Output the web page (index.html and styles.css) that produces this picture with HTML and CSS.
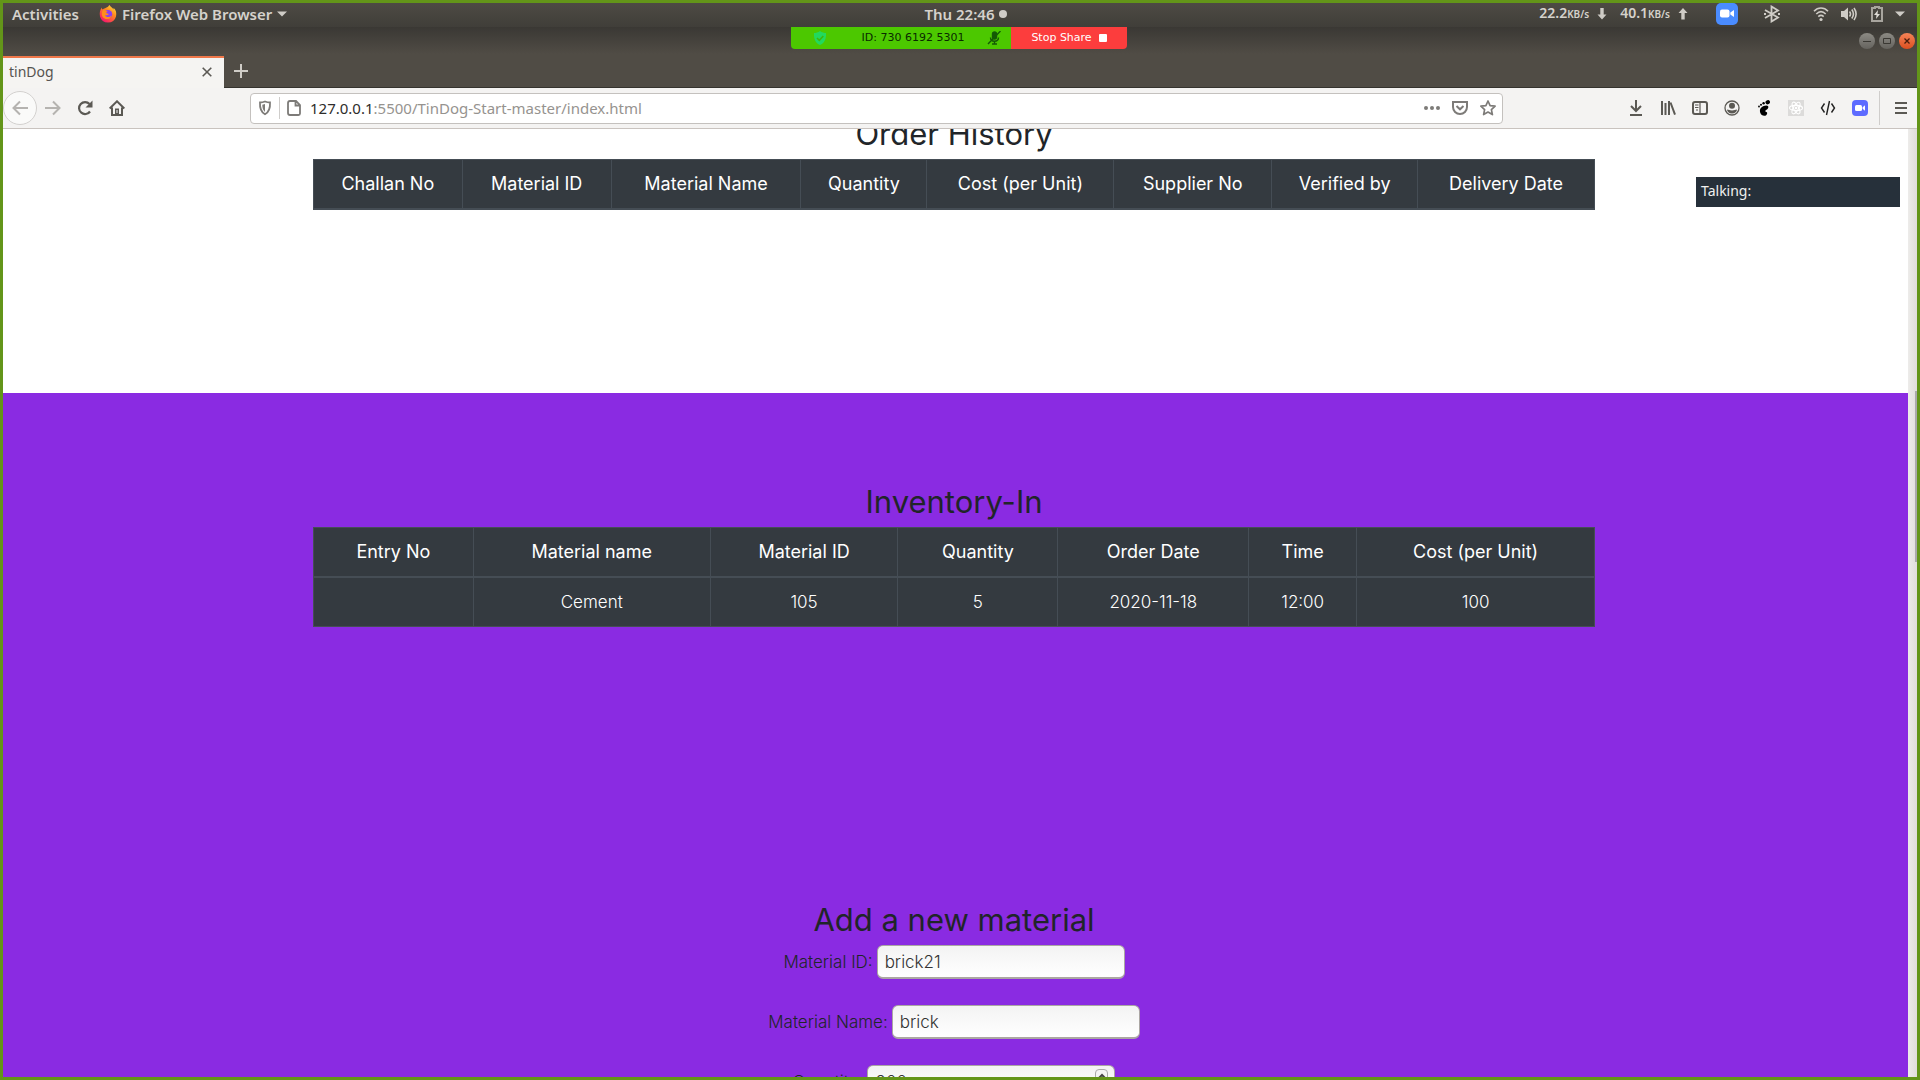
FILE: index.html
```html
<!DOCTYPE html>
<html lang="en">
<head>
<meta charset="utf-8">
<title>tinDog</title>
<link rel="stylesheet" href="styles.css">
</head>
<body>
<header class="topbar">
  <nav class="topbar-left">
    <button class="bare">Activities</button>
    <button class="bare app-menu">
      <svg width="18" height="18" viewBox="0 0 18 18"><defs><linearGradient id="fx" x1="1" y1="0" x2="0.3" y2="1"><stop offset="0" stop-color="#fff044"/><stop offset=".45" stop-color="#ff8a1e"/><stop offset="1" stop-color="#f5156c"/></linearGradient></defs><path d="M9 1.8C10 .8 10.200 0 10.500 0c1 2 3 2.500 4 4.500 0-.8.2-1.300 0-1.700C17 5 17.800 8 17 11.500A8.300 8.300 0 0 1 1 11.500C.3 8 1 5 2.800 2.600c0 1 .3 1.500.7 2C5 3.500 7 3 9 1.800z" fill="url(#fx)"/><circle cx="9" cy="9.200" r="4.200" fill="#8a3ff0"/><path d="M4 5c2 .2 3.500.5 4.800 1.600-2 .2-1.800 1.400-.6 1.800 1 .2 1.500.2 1.600.8-1 1.400-2.600.9-3.800 1 1 2 4 2.600 6.500.2C12 15 5 15.500 3.200 11 2.500 9 3 6.500 4 5z" fill="#ff8d1a"/></svg>
      <span>Firefox Web Browser</span>
      <svg width="10" height="6" viewBox="0 0 10 6"><path d="M0 .5h10L5 5.500z" fill="#cfccc6"/></svg>
    </button>
  </nav>
  <button class="bare clock"><span>Thu 22:46</span><i class="dot"></i></button>
  <div class="tray">
    <span class="rate">22.2<small>KB/s</small></span>
    <svg width="10" height="12" viewBox="0 0 10 12"><path d="M3.300 0h3.400v6.500H9.500L5 11.500.5 6.500h2.800z" fill="#cfccc6"/></svg>
    <span class="rate up">40.1<small>KB/s</small></span>
    <svg width="10" height="12" viewBox="0 0 10 12"><path d="M3.300 11.500h3.400V5H9.500L5 0 .5 5h2.800z" fill="#cfccc6"/></svg>
    <svg class="t-zoom" width="22" height="22" viewBox="0 0 22 22"><rect width="22" height="22" rx="5" fill="#4a8cff"/><rect x="4" y="6.500" width="9.500" height="8" rx="2" fill="#fff"/><path d="M14.300 9.500l3.700-2.500v7l-3.700-2.500z" fill="#fff"/></svg>
    <svg class="t-bt" width="18" height="18" viewBox="0 0 18 18" fill="none" stroke="#cfccc6" stroke-width="1.800"><path d="M2 5l13 7.500L8.500 16.500V1.500L15 5.500 2 13M1 9h2M15 9h2"/></svg>
    <svg class="t-wifi" width="16" height="16" viewBox="0 0 16 16" fill="none" stroke="#cfccc6" stroke-width="1.600"><path d="M1 5.200c4-4.200 10-4.200 14 0M3.300 8c3-3 6.400-3 9.400 0M5.300 10.600c1.800-1.600 3.600-1.600 5.400 0"/><circle cx="8" cy="13.500" r="1.600" fill="#cfccc6" stroke="none"/></svg>
    <svg class="t-vol" width="16" height="16" viewBox="0 0 16 16" fill="none" stroke="#cfccc6" stroke-width="1.600"><path d="M0 5h3l4-3.500v13L3 11H0z" fill="#cfccc6" stroke="none"/><path d="M8.500 5.500c1.200 1.500 1.200 3.500 0 5M10.800 3.500c2.200 3 2.200 6 0 9M13 2c2.800 4 2.800 8 0 12"/></svg>
    <svg class="t-bat" width="12" height="16" viewBox="0 0 12 16"><path d="M4 2V1h4v1h3v13H1V2z" fill="none" stroke="#a8a59e" stroke-width="2"/><path d="M7 4L3 9h2.500L5 13l4-5H6.500z" fill="#dfdcd6"/></svg>
    <svg class="t-arrow" width="10" height="6" viewBox="0 0 10 6"><path d="M0 .5h10L5 5.500z" fill="#cfccc6"/></svg>
  </div>
</header>

<div class="titlebar">
  <div class="tab">
    <span>tinDog</span>
    <button class="bare" aria-label="Close tab"><svg width="10" height="10" viewBox="0 0 10 10" stroke="#5b5954" stroke-width="1.600"><path d="M.7.7l8.600 8.600M9.300.7L.7 9.300"/></svg></button>
  </div>
  <button class="bare newtab" aria-label="New tab"><svg width="14" height="14" viewBox="0 0 14 14" stroke="#cfccc6" stroke-width="2"><path d="M7 0v14M0 7h14"/></svg></button>
  <div class="winbtns">
    <button class="win" aria-label="Minimize"><svg width="10" height="10" viewBox="0 0 10 10" stroke="#3a3833" fill="none"><path d="M1 5.500h8"/></svg></button>
    <button class="win" aria-label="Maximize"><svg width="10" height="10" viewBox="0 0 10 10" stroke="#3a3833" fill="none"><path d="M1.500 2.500h7v5h-7z"/></svg></button>
    <button class="win close" aria-label="Close"><svg width="10" height="10" viewBox="0 0 10 10" stroke="#4a1d0c" stroke-width="1.300"><path d="M2.500 2.500l5 5M7.500 2.500l-5 5"/></svg></button>
  </div>
</div>

<div class="toolbar">
  <div class="navbtns">
    <button class="tool back" aria-label="Back"><svg width="16" height="16" viewBox="0 0 16 16" fill="none" stroke="#b5b3b0" stroke-width="2"><path d="M16 8H1.500M8 1.500L1.500 8 8 14.500"/></svg></button>
    <button class="tool" aria-label="Forward"><svg width="16" height="16" viewBox="0 0 16 16" fill="none" stroke="#b5b3b0" stroke-width="2"><path d="M0 8h14.500M8 1.500L14.500 8 8 14.500"/></svg></button>
    <button class="tool" aria-label="Reload"><svg width="16" height="16" viewBox="0 0 16 16" fill="none" stroke="#5b5954" stroke-width="2.200"><path d="M13 11.500A6 6 0 1 1 12.500 4"/><path d="M15.500.5v7h-7z" fill="#5b5954" stroke="none"/></svg></button>
    <button class="tool" aria-label="Home"><svg width="16" height="16" viewBox="0 0 16 16" fill="none" stroke="#5b5954" stroke-width="2"><path d="M.7 8.500L8 1.300l7.300 7.200M3 7.500V15h10V7.500"/><path d="M6 8.500h4V15H6z" fill="#5b5954" stroke="none"/><path d="M7.500 10h1v3h-1z" fill="#f4f3f2" stroke="none"/></svg></button>
  </div>
  <div class="urlbar">
    <svg class="shield" width="14" height="16" viewBox="0 0 14 16"><path d="M7 1.500c2 .8 4 1 5 1 .3 5-.8 9.500-5 11.800C2.800 12 1.700 7.500 2 2.500c1 0 3-.2 5-1z" fill="none" stroke="#7d7b78" stroke-width="1.800"/><path d="M7 4v8C5 10 4.300 8 4.300 4.700z" fill="#7d7b78"/></svg>
    <i class="vline"></i>
    <svg width="14" height="16" viewBox="0 0 14 16" fill="none" stroke="#7d7b78" stroke-width="1.800"><path d="M3 1h6l4 4v8.500Q13 15 11.500 15H3Q1 15 1 13V3Q1 1 3 1zM8.500 1v4.500H13"/></svg>
    <a class="url" href="#"><b>127.0.0.1</b>:5500/TinDog-Start-master/index.html</a>
    <svg width="16" height="16" viewBox="0 0 16 16" fill="#7d7b78"><circle cx="2" cy="8" r="2"/><circle cx="8" cy="8" r="2"/><circle cx="14" cy="8" r="2"/></svg>
    <svg width="16" height="16" viewBox="0 0 16 16" fill="none" stroke="#7d7b78" stroke-width="2"><path d="M1 2h14v5a7 7 0 0 1-14 0zM4.500 6L8 9.300 11.500 6"/></svg>
    <svg width="16" height="16" viewBox="0 0 16 16" fill="none" stroke="#7d7b78" stroke-width="1.700" stroke-linejoin="round"><path d="M8 1l2.100 4.600 5 .6-3.700 3.400 1 5L8 12.100l-4.400 2.500 1-5L.9 6.200l5-.6z"/></svg>
  </div>
  <div class="tools">
    <button class="tool" aria-label="Downloads"><svg width="16" height="16" viewBox="0 0 16 16" fill="none" stroke="#5b5954" stroke-width="2"><path d="M8 0v11M3 6l5 5 5-5M2 15h12"/></svg></button>
    <button class="tool" aria-label="Library"><svg width="16" height="16" viewBox="0 0 16 16" fill="none" stroke="#5b5954" stroke-width="2"><path d="M2 1v14M5.500 3v12M9 1v14M10.500 2.500L15 14.700"/></svg></button>
    <button class="tool" aria-label="Sidebar"><svg width="16" height="16" viewBox="0 0 16 16" fill="none" stroke="#5b5954" stroke-width="2"><rect x="1" y="2" width="14" height="12" rx="2"/><path d="M8 2v12M3 5h3.500M3 7.500h3.500M4 10h2" stroke-width="1.200"/></svg></button>
    <button class="tool" aria-label="Account"><svg width="16" height="16" viewBox="0 0 16 16"><circle cx="8" cy="8" r="7" fill="none" stroke="#5b5954" stroke-width="1.300"/><circle cx="8" cy="5.800" r="3" fill="#5b5954"/><path d="M3 9.500c2 0 2.500 1 5 1s3-1 5-1c0 2-2 4-5 4s-5-2-5-4z" fill="#5b5954"/></svg></button>
    <button class="tool" aria-label="GNOME extensions"><svg width="16" height="16" viewBox="0 0 16 16" fill="#000"><ellipse cx="11.700" cy="2.200" rx="2.300" ry="2" transform="rotate(-30 11.700 2.200)"/><circle cx="7.600" cy="3.200" r="1.200"/><circle cx="5" cy="4.700" r="1"/><circle cx="3" cy="6.500" r=".9"/><path d="M10.500 5.500c2.500 0 2.500 3 0 4.200-1.500.7-1.500 2-.2 2.300 1.500 0 1.200 3.800-2 3.800C4.500 15.800 3 11 4.500 8.500 5.800 6.500 8 5.500 10.500 5.500z"/></svg></button>
    <button class="tool" aria-label="React tools"><svg width="16" height="16" viewBox="0 0 16 16"><path d="M0 0h16v16H0z" fill="#dcdbda"/><g fill="none" stroke="#fff" stroke-width="1.100"><ellipse cx="8" cy="8" rx="6.500" ry="2.600"/><ellipse cx="8" cy="8" rx="6.500" ry="2.600" transform="rotate(60 8 8)"/><ellipse cx="8" cy="8" rx="6.500" ry="2.600" transform="rotate(120 8 8)"/></g><circle cx="8" cy="8" r="1.300" fill="#fff"/></svg></button>
    <button class="tool" aria-label="Code"><svg width="16" height="16" viewBox="0 0 16 16" fill="none" stroke="#222" stroke-width="1.400"><path d="M4.500 3.500L1.500 8l3 4.500M11.500 3.500l3 4.500-3 4.500M9.500 1l-3 14"/></svg></button>
    <button class="tool" aria-label="Zoom"><svg width="16" height="16" viewBox="0 0 16 16"><rect width="16" height="16" rx="4" fill="#5d6bff"/><rect x="3" y="5" width="7" height="6" rx="1.500" fill="#fff"/><path d="M10.600 7.300L13 5.300v5.400l-2.400-2z" fill="#fff"/></svg></button>
    <i class="vline tall"></i>
    <button class="tool" aria-label="Menu"><svg width="12" height="14" viewBox="0 0 12 14" stroke="#5b5954" stroke-width="2"><path d="M0 2h12M0 7h12M0 12h12"/></svg></button>
  </div>
</div>

<div class="viewport">
  <main class="page">
    <section class="history">
      <h3>Order History</h3>
      <table>
        <colgroup><col class="w149"><col class="w149"><col class="w190"><col class="w126"><col class="w187"><col class="w158"><col class="w146"><col></colgroup>
        <thead><tr><th>Challan No</th><th>Material ID</th><th>Material Name</th><th>Quantity</th><th>Cost (per Unit)</th><th>Supplier No</th><th>Verified by</th><th>Delivery Date</th></tr></thead>
      </table>
    </section>
    <section class="inventory">
      <h3>Inventory-In</h3>
      <table>
        <colgroup><col class="w160"><col class="w237"><col class="w188"><col class="w160"><col class="w191"><col class="w108"><col></colgroup>
        <thead><tr><th>Entry No</th><th>Material name</th><th>Material ID</th><th>Quantity</th><th>Order Date</th><th>Time</th><th>Cost (per Unit)</th></tr></thead>
        <tbody><tr><td></td><td>Cement</td><td>105</td><td>5</td><td>2020-11-18</td><td>12:00</td><td>100</td></tr></tbody>
      </table>
      <form class="material">
        <h3>Add a new material</h3>
        <div class="field"><label for="mid">Material ID:</label><input id="mid" type="text" value="brick21"></div>
        <div class="field"><label for="mname">Material Name:</label><input id="mname" type="text" value="brick"></div>
        <div class="field"><label for="qty">Quantity:</label><span class="number"><input id="qty" type="number" value="200"><span class="spin"><svg width="8" height="6" viewBox="0 0 8 6" fill="none" stroke="#444" stroke-width="2"><path d="M1 5l3-3 3 3"/></svg></span></span></div>
      </form>
    </section>
  </main>
  <div class="scrollbar"><i class="thumb"></i></div>
</div>

<div class="share">
  <div class="share-id">
    <svg width="14" height="14" viewBox="0 0 14 14"><path d="M7 0c2 1.400 4 2 6 2 .3 6-1.500 10-6 12C2.500 12 .7 8 1 2c2 0 4-.6 6-2z" fill="#22d95e"/><path d="M4 7l2.300 2.300L10.300 5" fill="none" stroke="#3fb80a" stroke-width="1.600"/></svg>
    <span>ID: 730 6192 5301</span>
    <svg width="14" height="14" viewBox="0 0 14 14" fill="none" stroke="#145a05" stroke-width="1.400"><rect x="5.500" y="1" width="4" height="7" rx="2" fill="#145a05"/><path d="M3.500 6.500c0 5 8 5 8 0M7.500 10v3M5 13h5M13.500 0L1 13"/></svg>
  </div>
  <button class="stop">Stop Share<i></i></button>
</div>
<div class="talking">Talking:</div>
<div class="frame"></div>
</body>
</html>
```
FILE: styles.css
```css
* { box-sizing: border-box; }
body {
  margin: 0;
  height: 100vh;
  display: flex;
  flex-direction: column;
  overflow: hidden;
  position: relative;
  font: 14px/20px "Noto Sans", sans-serif;
  background: #fff;
}
button { font: inherit; color: inherit; padding: 0; margin: 0; border: 0; background: none; }
svg { display: block; flex: none; }
.bare { display: flex; align-items: center; }

/* desktop panel */
.topbar {
  flex: none;
  height: 27px;
  padding: 0 15px 0 12px;
  display: grid;
  grid-template-columns: 1fr auto 1fr;
  align-items: center;
  background: linear-gradient(#4f4c45, #403e39);
  color: #d5d2cc;
  font-size: 15px;
  font-weight: 600;
}
.topbar-left { display: flex; gap: 20px; }
.app-menu { gap: 5px; }
.clock { gap: 4px; padding-left: 14px; }
.dot { width: 8px; height: 8px; border-radius: 50%; background: #d0cdc8; }
.tray { display: flex; align-items: center; justify-content: flex-end; font-size: 14px; }
.rate { margin-right: 8px; }
.rate.up { margin-left: 13px; }
.rate small { font-size: 10px; }
.t-zoom { margin-left: 28px; }
.t-bt { margin-left: 25px; }
.t-wifi { margin-left: 32px; }
.t-vol { margin-left: 12px; }
.t-bat { margin-left: 14px; }
.t-arrow { margin-left: 12px; }

/* browser window */
.titlebar {
  flex: none;
  height: 61px;
  display: flex;
  align-items: flex-end;
  background: linear-gradient(#3a3834, #504c45 45%);
  border-bottom: 1px solid #35332e;
}
.tab {
  width: 224px;
  height: 32px;
  padding: 0 12px 2px 9px;
  display: flex;
  align-items: center;
  justify-content: space-between;
  background: #f5f4f2;
  border-top: 2px solid #f0784a;
  margin-bottom: -1px;
  color: #55534f;
}
.newtab { height: 33px; margin-left: 10px; }
.winbtns { margin-left: auto; align-self: flex-start; display: flex; gap: 4px; padding: 6px 5px 0 0; }
.win {
  width: 16px;
  height: 16px;
  border-radius: 50%;
  display: grid;
  place-items: center;
  background: linear-gradient(#8c8a84, #65635e);
}
.win.close { background: linear-gradient(#f58357, #dd4f20); }
.toolbar {
  flex: none;
  height: 41px;
  display: flex;
  align-items: center;
  background: #f4f3f2;
  border-bottom: 1px solid #c9c3bf;
}
.navbtns { display: flex; align-items: center; padding-left: 3px; margin-right: 117px; }
.tool { width: 32px; height: 32px; display: grid; place-items: center; }
.tool.back { width: 34px; height: 34px; border: 1px solid #d3d1cf; border-radius: 50%; background: #fafaf9; }
.urlbar {
  flex: 1;
  height: 31px;
  display: flex;
  align-items: center;
  gap: 12px;
  padding: 0 6px 0 7px;
  background: #fff;
  border: 1px solid #c4c1be;
  border-radius: 4px;
}
.vline { width: 1px; height: 22px; background: #cfcdcb; }
.shield + .vline { margin: 0 -5px 0 -5px; }
.vline.tall { height: 34px; margin: 0 5px 0 3px; }
.url { flex: 1; margin-left: -3px; color: #96938f; text-decoration: none; font-size: 15px; }
.url b { font-weight: 400; color: #2e2d2b; }
.tools { display: flex; align-items: center; padding-left: 117px; padding-right: 3px; }

/* web page */
.viewport { flex: 1; min-height: 0; display: flex; overflow: hidden; }
.page {
  flex: 1;
  overflow: hidden;
  display: flex;
  flex-direction: column;
  font: 17px/24px Inter, sans-serif;
  color: #212529;
  text-align: center;
}
.scrollbar { width: 12px; background: linear-gradient(90deg, #edecea, #dcd8d6); padding: 262px 3px 0 7px; }
.thumb { display: block; height: 171px; background: #aaaaaa; }
h3 { margin: 0 0 8px; font-size: 31px; line-height: 34px; font-weight: 400; }
.history { flex: none; margin-top: -12px; padding-bottom: 183px; }
.inventory { flex: none; padding-top: 92px; background: #8a2be2; }
table {
  width: 67.2%;
  margin: 0 auto;
  table-layout: fixed;
  border-collapse: collapse;
  background: #343a40;
  color: #fff;
}
th, td { border: 1px solid #454d55; padding: 12px; font-weight: 300; }
th { font-size: 18px; font-weight: 400; }
thead th { border-bottom-width: 2px; }
.w108 { width: 8.42%; }
.w126 { width: 9.83%; }
.w146 { width: 11.39%; }
.w149 { width: 11.62%; }
.w158 { width: 12.32%; }
.w160 { width: 12.48%; }
.w187 { width: 14.59%; }
.w188 { width: 14.66%; }
.w190 { width: 14.82%; }
.w191 { width: 14.90%; }
.w237 { width: 18.49%; }
.material { padding-top: 276px; }
.field { display: flex; justify-content: center; align-items: center; gap: 4px; margin-bottom: 26px; font-weight: 300; }
.field input {
  display: block;
  width: 248px;
  height: 34px;
  padding: 0 7px;
  border: 1px solid #aba7a3;
  border-bottom-width: 2px;
  border-radius: 6px;
  background: linear-gradient(#f3f3f3, #fff);
  color: #333;
  font: inherit;
  appearance: textfield;
}
.number { position: relative; }
.spin {
  position: absolute;
  top: 4px;
  right: 7px;
  width: 13px;
  height: 13px;
  display: grid;
  place-items: center;
  border: 1px solid #aaa;
  border-radius: 4px;
  background: #f4f4f4;
}

/* screen sharing overlays */
.share {
  position: absolute;
  top: 27px;
  left: 50%;
  width: 336px;
  height: 22px;
  margin-left: -169px;
  display: flex;
  border-radius: 0 0 4px 4px;
  overflow: hidden;
  font: 11px/22px "DejaVu Sans", sans-serif;
}
.share-id { flex: 1; display: flex; align-items: center; justify-content: space-between; padding: 0 10px 0 22px; background: #4cc800; color: #0a2a00; }
.share-id span { margin-left: 12px; }
.stop { width: 116px; display: flex; align-items: center; justify-content: center; gap: 7px; background: #fc3d3d; color: #fff; }
.stop i { width: 8px; height: 8px; background: #fff; border-radius: 1px; }
.talking {
  position: absolute;
  top: 177px;
  right: 20px;
  width: 204px;
  height: 30px;
  padding: 4px 5px;
  background: #26303a;
  color: #f0f0f0;
}
.frame { position: absolute; inset: 0; border: 3px solid #639519; pointer-events: none; }
```
